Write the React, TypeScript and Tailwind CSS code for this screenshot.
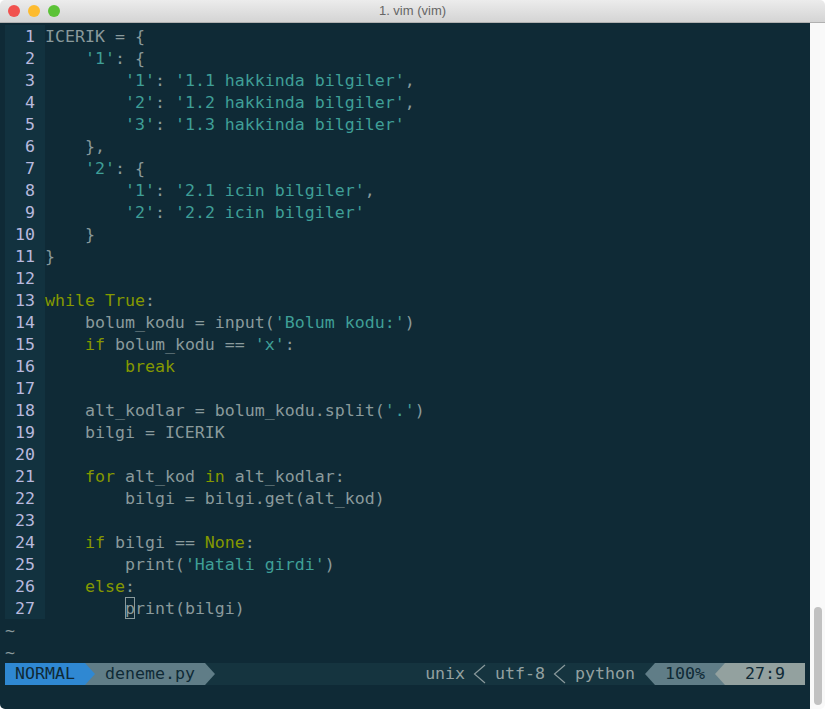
// vim window inside a terminal, solarized dark

type Tok = 'n' | 's' | 'k';
type Seg = [Tok, string];

const lines: Seg[][] = [
  [['n', 'ICERIK = {']],
  [['n', '    '], ['s', "'1'"], ['n', ': {']],
  [['n', '        '], ['s', "'1'"], ['n', ': '], ['s', "'1.1 hakkinda bilgiler'"], ['n', ',']],
  [['n', '        '], ['s', "'2'"], ['n', ': '], ['s', "'1.2 hakkinda bilgiler'"], ['n', ',']],
  [['n', '        '], ['s', "'3'"], ['n', ': '], ['s', "'1.3 hakkinda bilgiler'"]],
  [['n', '    },']],
  [['n', '    '], ['s', "'2'"], ['n', ': {']],
  [['n', '        '], ['s', "'1'"], ['n', ': '], ['s', "'2.1 icin bilgiler'"], ['n', ',']],
  [['n', '        '], ['s', "'2'"], ['n', ': '], ['s', "'2.2 icin bilgiler'"]],
  [['n', '    }']],
  [['n', '}']],
  [],
  [['k', 'while True'], ['n', ':']],
  [['n', '    bolum_kodu = input('], ['s', "'Bolum kodu:'"], ['n', ')']],
  [['n', '    '], ['k', 'if'], ['n', ' bolum_kodu == '], ['s', "'x'"], ['n', ':']],
  [['n', '        '], ['k', 'break']],
  [],
  [['n', '    alt_kodlar = bolum_kodu.split('], ['s', "'.'"], ['n', ')']],
  [['n', '    bilgi = ICERIK']],
  [],
  [['n', '    '], ['k', 'for'], ['n', ' alt_kod '], ['k', 'in'], ['n', ' alt_kodlar:']],
  [['n', '        bilgi = bilgi.get(alt_kod)']],
  [],
  [['n', '    '], ['k', 'if'], ['n', ' bilgi == '], ['k', 'None'], ['n', ':']],
  [['n', '        print('], ['s', "'Hatali girdi'"], ['n', ')']],
  [['n', '    '], ['k', 'else'], ['n', ':']],
];

const tokClass: Record<Tok, string> = {
  n: 'text-[#8a9a9c]',
  s: 'text-[#3f9f97]',
  k: 'text-[#859900]',
};

function Gutter({ n }: { n: number }) {
  return (
    <span className="w-[40px] shrink-0 bg-[#12323f] pr-[10px] text-right font-medium text-[#b8b9de]">{n}</span>
  );
}

function ArrowRight({ fg, bg }: { fg: string; bg: string }) {
  return (
    <svg width="10" height="22" viewBox="0 0 10 22" className="shrink-0 block" style={{ background: bg }}>
      <path d="M0 0L10 11L0 22Z" fill={fg} />
    </svg>
  );
}

function ArrowLeft({ fg, bg }: { fg: string; bg: string }) {
  return (
    <svg width="10" height="22" viewBox="0 0 10 22" className="shrink-0 block" style={{ background: bg }}>
      <path d="M10 0L0 11L10 22Z" fill={fg} />
    </svg>
  );
}

function ThinLeft() {
  return (
    <svg width="30" height="22" viewBox="0 0 30 22" className="shrink-0 block">
      <path d="M20 2L9.500 11L20 20" fill="none" stroke="#8a9a9c" strokeWidth="1.200" />
    </svg>
  );
}

export default function App() {
  return (
    <div className="h-[709px] w-[825px] overflow-hidden bg-white">
      <div className="flex h-full flex-col overflow-hidden rounded-[5px]">
        {/* Title bar */}
        <div className="relative flex h-[23px] shrink-0 items-center justify-center border-b border-[#b1b1b1] bg-gradient-to-b from-[#ececec] to-[#d4d4d4]">
          <div className="absolute left-[8px] top-[5px] flex gap-[8px]">
            <span className="h-[12px] w-[12px] rounded-full bg-[#f1524f]" />
            <span className="h-[12px] w-[12px] rounded-full bg-[#fdbb2f]" />
            <span className="h-[12px] w-[12px] rounded-full bg-[#5bc236]" />
          </div>
          <span className="font-['Liberation_Sans',sans-serif] text-[13px] text-[#666666]">1. vim (vim)</span>
        </div>

        <div className="flex min-h-0 flex-1">
          {/* Terminal */}
          <div className="w-[810px] bg-[#0f2a36] pl-[5px] pr-[5px] pt-[2px] font-['DejaVu_Sans_Mono',monospace] text-[16.6px] leading-[24px] whitespace-pre">
            {lines.map((segs, i) => (
              <div key={i} className="flex h-[22px]">
                <Gutter n={i + 1} />
                <span>
                  {segs.map((s, j) => (
                    <span key={j} className={tokClass[s[0]]}>{s[1]}</span>
                  ))}
                </span>
              </div>
            ))}
            <div className="flex h-[22px]">
              <Gutter n={27} />
              <span className="text-[#8a9a9c]">
                {'        '}
                <span className="inline-block h-[22px] w-[10px] align-top outline outline-1 -outline-offset-1 outline-[#8a9a9c]">p</span>
                {'rint(bilgi)'}
              </span>
            </div>
            <div className="h-[22px] text-[#8a9a9c]">~</div>
            <div className="h-[22px] text-[#8a9a9c]">~</div>

            {/* Status line */}
            <div className="flex h-[22px] bg-[#15343f] leading-[22px] text-[#0f2a36]">
              <span className="w-[80px] shrink-0 bg-[#2f88d2] pl-[10px]">NORMAL</span>
              <ArrowRight fg="#2f88d2" bg="#607d87" />
              <span className="w-[110px] shrink-0 bg-[#607d87] pl-[10px] pr-0">deneme.py</span>
              <ArrowRight fg="#607d87" bg="#15343f" />
              <span className="flex flex-1 justify-end text-[#93a1a1]">
                <span>unix</span>
                <ThinLeft />
                <span>utf-8</span>
                <ThinLeft />
                <span>python</span>
                <span className="w-[10px]" />
              </span>
              <ArrowLeft fg="#607d87" bg="#15343f" />
              <span className="w-[60px] shrink-0 bg-[#607d87] pl-[10px]">100%</span>
              <ArrowLeft fg="#93a19f" bg="#607d87" />
              <span className="w-[80px] shrink-0 bg-[#93a19f] pl-[20px]">27:9</span>
            </div>
          </div>

          {/* Scrollbar */}
          <div className="flex w-[15px] flex-col justify-end bg-[#f9f9f9] pb-[4px] pl-[4px]">
            <div className="h-[98px] w-[8px] rounded-full bg-[#c1c1c1]" />
          </div>
        </div>
      </div>
    </div>
  );
}
